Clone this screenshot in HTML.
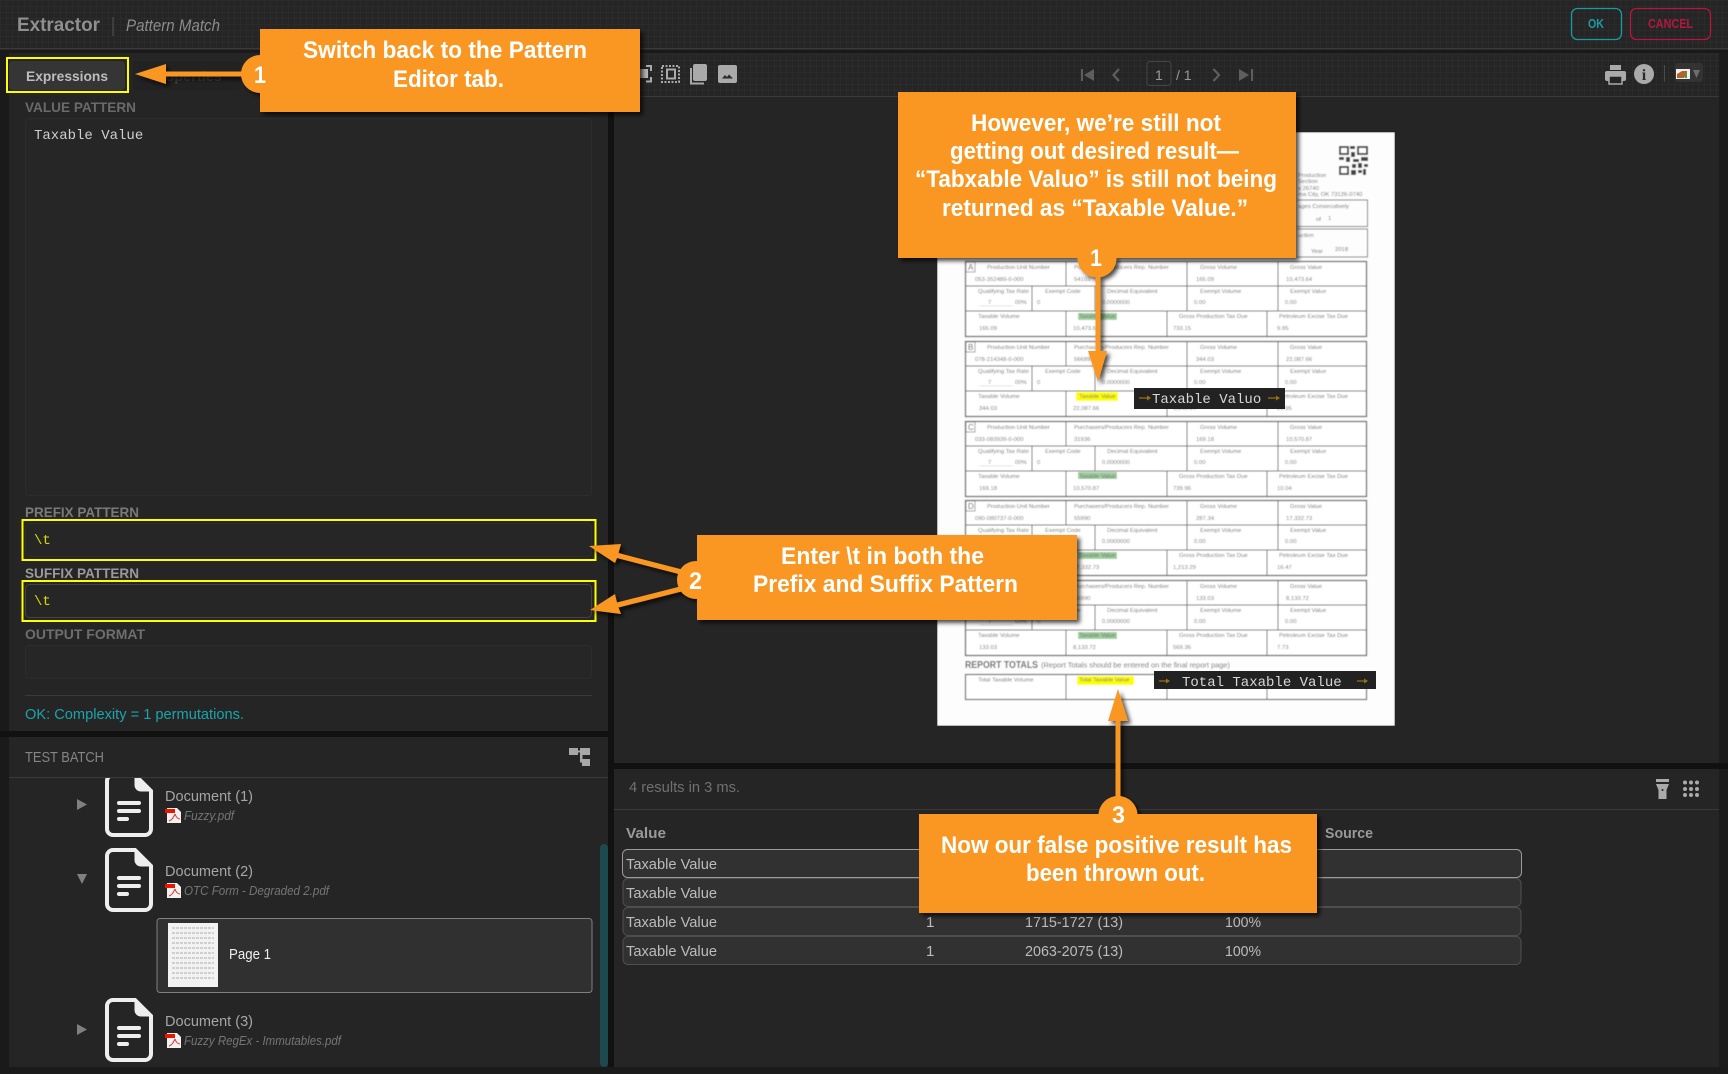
<!DOCTYPE html>
<html lang="en"><head><meta charset="utf-8"><title>Extractor - Pattern Match</title>
<style>
html,body{margin:0;padding:0;background:#161616;width:1728px;height:1074px;overflow:hidden}
svg{display:block;font-family:"Liberation Sans",sans-serif}
.mono{font-family:"Liberation Mono",monospace}
.co{font-weight:700;font-size:24px;fill:#fff;text-anchor:start}
.l{font-size:5.9px;fill:#6e6e6e}
.v{font-size:5.9px;fill:#747474}
.lab{font-size:14px;font-weight:700}
.cell{font-size:15px;fill:#bcbcbc}
.doc{font-size:15px;fill:#a6a6a6}
.file{font-size:13px;font-style:italic;fill:#757575}
</style></head><body>
<svg width="1728" height="1074" viewBox="0 0 1728 1074" xmlns="http://www.w3.org/2000/svg">
<defs>
<pattern id="grid" width="6" height="6" patternUnits="userSpaceOnUse"><rect width="6" height="6" fill="#252525"/><path d="M0 .5H6M.5 0V6" stroke="#2b2b2b" stroke-width="1"/></pattern>
<filter id="sh" x="-20%" y="-20%" width="140%" height="140%"><feDropShadow dx="3" dy="3" stdDeviation="2" flood-color="#000" flood-opacity=".7"/></filter>
<filter id="bl" x="0" y="0" width="100%" height="100%"><feGaussianBlur stdDeviation=".45"/></filter>
<clipPath id="treeclip"><rect x="9" y="778" width="599" height="289"/></clipPath>
<g id="docicon">
<path d="M113 850H135L151 866V904a6 6 0 0 1-6 6H113a6 6 0 0 1-6-6V856a6 6 0 0 1 6-6z" fill="none" stroke="#eee" stroke-width="4"/>
<path d="M135 850V860a6 6 0 0 0 6 6H151z" fill="#eee" stroke="#eee" stroke-width="1"/>
<path d="M119 878H139M119 886H139M119 894H127" stroke="#eee" stroke-width="4" stroke-linecap="round"/>
</g>
<g id="pdf">
<path d="M167 883H177L181 887V898H167z" fill="#f1f1f1"/>
<rect x="165" y="884" width="10" height="4" fill="#e81500"/>
<path d="M175 889C173 893 172 895 169 896M175 889C176 892 178 894 180 894" fill="none" stroke="#e03020" stroke-width="1"/>
</g>
<g id="rep">
<rect x="965.5" y="261.5" width="401" height="75" fill="#fff" stroke="#666" stroke-width="1.3"/>
<path d="M965 286H1367M965 311H1367M1066 261V286M1187 261V311M1278 261V311M1032 286V311M1095 286V311M1066 311V336M1167 311V336M1267 311V336" stroke="#666" stroke-width="1" fill="none"/>
<rect x="966" y="262" width="9" height="10" fill="#fff" stroke="#777" stroke-width=".7"/>
<text class="l" x="987" y="269">Production Unit Number</text>
<text class="l" x="1074" y="269">Purchasers/Producers Rep. Number</text>
<text class="l" x="1200" y="269">Gross Volume</text>
<text class="l" x="1290" y="269">Gross Value</text>
<text class="l" x="978" y="293">Qualifying Tax Rate</text>
<text class="l" x="1045" y="293">Exempt Code</text>
<text class="l" x="1107" y="293">Decimal Equivalent</text>
<text class="l" x="1200" y="293">Exempt Volume</text>
<text class="l" x="1290" y="293">Exempt Value</text>
<text class="l" x="978" y="318">Taxable Volume</text>
<text class="l" x="1179" y="318">Gross Production Tax Due</text>
<text class="l" x="1279" y="318">Petroleum Excise Tax Due</text>
<text class="v" x="988" y="304">7</text><text class="v" x="1015" y="304">00%</text><text class="v" x="1037" y="304">0</text>
<path d="M980 306H1013" stroke="#999" stroke-width=".6" stroke-dasharray="1.500 1"/>
<text class="v" x="1102" y="304">0.0000000</text><text class="v" x="1194" y="304">0.00</text><text class="v" x="1285" y="304">0.00</text>
</g>
</defs>

<rect width="1728" height="1074" fill="#1a1a1a"/>
<!-- header -->
<rect width="1728" height="48" fill="url(#grid)"/>
<rect y="48" width="1728" height="1.5" fill="#3a3a3a"/>
<text x="17" y="31" font-size="19" font-weight="700" fill="#8f8f8f" textLength="83" lengthAdjust="spacingAndGlyphs">Extractor</text>
<rect x="112.5" y="17" width="1" height="19" fill="#555"/>
<text x="126" y="31" font-size="17" font-style="italic" fill="#8c8c8c" textLength="94" lengthAdjust="spacingAndGlyphs">Pattern Match</text>
<rect x="1571.5" y="8.5" width="50" height="31" rx="6" fill="none" stroke="#1a9aa5" stroke-width="1.3"/>
<text x="1588" y="28" font-size="13" font-weight="700" fill="#1a9aa5" textLength="16" lengthAdjust="spacingAndGlyphs">OK</text>
<rect x="1630.5" y="8.5" width="80" height="31" rx="6" fill="none" stroke="#b5173f" stroke-width="1.3"/>
<text x="1648" y="28" font-size="13" font-weight="700" fill="#b5173f" textLength="45" lengthAdjust="spacingAndGlyphs">CANCEL</text>

<!-- left panel -->
<rect x="9" y="53" width="599" height="678" fill="#252525"/>
<rect x="9" y="61" width="116" height="29" rx="4" fill="#353535"/>
<text x="26" y="81" font-size="14" font-weight="700" fill="#bdbdbd" textLength="82" lengthAdjust="spacingAndGlyphs">Expressions</text>
<rect x="133" y="61" width="107" height="29" rx="4" fill="#222"/>
<text x="150" y="81" font-size="14" font-weight="700" fill="#3e3e3e" textLength="72" lengthAdjust="spacingAndGlyphs">Properties</text>
<rect x="7" y="58" width="121" height="34" fill="none" stroke="#ff0" stroke-width="2"/>
<text class="lab" x="25" y="112" fill="#6a6a6a" textLength="111" lengthAdjust="spacingAndGlyphs">VALUE PATTERN</text>
<rect x="25.5" y="118.5" width="566" height="377" rx="4" fill="#262626" stroke="#2d2d2d"/>
<text class="mono" x="34" y="139" font-size="14" fill="#cfcfcf">Taxable Value</text>
<text class="lab" x="25" y="517" fill="#7a7a7a" textLength="114" lengthAdjust="spacingAndGlyphs">PREFIX PATTERN</text>
<rect x="25.5" y="523.5" width="566" height="33" rx="4" fill="#262626" stroke="#2d2d2d"/>
<text class="mono" x="34" y="544" font-size="14" fill="#d9d900">\t</text>
<rect x="22.5" y="520" width="573" height="40" fill="none" stroke="#ff0" stroke-width="2"/>
<text class="lab" x="25" y="578" fill="#9a9a9a" textLength="114" lengthAdjust="spacingAndGlyphs">SUFFIX PATTERN</text>
<rect x="25.5" y="584.5" width="566" height="33" rx="4" fill="#262626" stroke="#444"/>
<text class="mono" x="34" y="605" font-size="14" fill="#d9d900">\t</text>
<rect x="22.5" y="581" width="573" height="40" fill="none" stroke="#ff0" stroke-width="2"/>
<text class="lab" x="25" y="639" fill="#6e6e6e" textLength="120" lengthAdjust="spacingAndGlyphs">OUTPUT FORMAT</text>
<rect x="25.5" y="645.5" width="566" height="33" rx="4" fill="#262626" stroke="#2d2d2d"/>
<rect x="25" y="695" width="567" height="1" fill="#393939"/>
<text x="25" y="719" font-size="15" fill="#1aa5ad" textLength="219" lengthAdjust="spacingAndGlyphs">OK: Complexity = 1 permutations.</text>
<rect x="0" y="731" width="614" height="6" fill="#111"/>
<rect x="608" y="53" width="6" height="1014" fill="#111"/>

<!-- test batch -->
<rect x="9" y="737" width="599" height="330" fill="#252525"/>
<text x="25" y="762" font-size="15" fill="#858585" textLength="79" lengthAdjust="spacingAndGlyphs">TEST BATCH</text>
<g fill="#a8a8a8"><rect x="569" y="748" width="9" height="7"/><rect x="580" y="748" width="10" height="7"/><rect x="582" y="759" width="8" height="7"/><path d="M578 750.500H580V752.500H578zM581 755H582.500V761H582V762.500H580V755z"/></g>
<rect x="9" y="777" width="599" height="1" fill="#3a3a3a"/>
<g clip-path="url(#treeclip)">
<use href="#docicon" transform="translate(0,-75)"/>
<path d="M77 799L87 804.5L77 810z" fill="#808080"/>
<text class="doc" x="165" y="801" textLength="88" lengthAdjust="spacingAndGlyphs">Document (1)</text>
<use href="#pdf" transform="translate(0,-75)"/>
<text class="file" x="184" y="820" textLength="50" lengthAdjust="spacingAndGlyphs">Fuzzy.pdf</text>
<use href="#docicon"/>
<path d="M77 874H87L82 884z" fill="#808080"/>
<text class="doc" x="165" y="876" textLength="88" lengthAdjust="spacingAndGlyphs">Document (2)</text>
<use href="#pdf"/>
<text class="file" x="184" y="895" textLength="145" lengthAdjust="spacingAndGlyphs">OTC Form - Degraded 2.pdf</text>
<rect x="157" y="918.5" width="435" height="74" rx="3" fill="#303030" stroke="#808080"/>
<rect x="168" y="923" width="50" height="64" fill="#f2f2f2"/>
<path d="M172 928H214M172 933H214M172 938H214M172 943H214M172 948H214M172 953H214M172 958H214M172 963H214M172 968H214M172 973H214M172 978H214" stroke="#c4c4c4" stroke-width="1.600" stroke-dasharray="3 1"/>
<text x="229" y="959" font-size="15" fill="#eee" textLength="42" lengthAdjust="spacingAndGlyphs">Page 1</text>
<use href="#docicon" transform="translate(0,150)"/>
<path d="M77 1024L87 1029.5L77 1035z" fill="#808080"/>
<text class="doc" x="165" y="1026" textLength="88" lengthAdjust="spacingAndGlyphs">Document (3)</text>
<use href="#pdf" transform="translate(0,150)"/>
<text class="file" x="184" y="1045" textLength="157" lengthAdjust="spacingAndGlyphs">Fuzzy RegEx - Immutables.pdf</text>
</g>
<rect x="600" y="844" width="8" height="223" rx="4" fill="#1c4a4e"/>

<!-- right viewer -->
<rect x="614" y="53" width="1105" height="710" fill="#252525"/>
<rect x="614" y="53" width="1105" height="43" fill="url(#grid)"/>
<rect x="614" y="96" width="1105" height="1" fill="#3a3a3a"/>
<rect x="1719" y="53" width="9" height="1014" fill="#1c1c1c"/>
<rect x="614" y="763" width="1114" height="6" fill="#111"/>
<!-- toolbar icons -->
<rect x="640" y="69" width="8" height="9" fill="#b5b5b5"/>
<path d="M646 66H651V71M651 77V81.500H646" fill="none" stroke="#aaa" stroke-width="2"/>
<rect x="662" y="66" width="17" height="16" fill="none" stroke="#aaa" stroke-width="2" stroke-dasharray="2 1.500"/>
<rect x="667" y="69.500" width="8" height="9" fill="none" stroke="#aaa" stroke-width="2"/>
<path d="M691 68V83.500H704" fill="none" stroke="#a8a8a8" stroke-width="2"/>
<rect x="693" y="64" width="14" height="17" rx="2" fill="#aaa"/>
<rect x="718" y="65" width="19" height="18" rx="2" fill="#aaa"/>
<path d="M722 78.500L725 75L727 77L729 74.500L733 78.500z" fill="#2a2a2a"/>
<g fill="#5e5e5e">
<rect x="1081" y="69" width="2" height="12"/><path d="M1094 69V81L1084 75z"/>
<rect x="1251" y="69" width="2" height="12"/><path d="M1239 69V81L1249 75z"/>
</g>
<path d="M1119 69L1113.500 75L1119 81M1213.500 69L1219 75L1213.500 81" fill="none" stroke="#5e5e5e" stroke-width="2.200"/>
<rect x="1147" y="61.500" width="24" height="24" rx="3" fill="none" stroke="#444"/>
<text x="1155" y="80" font-size="14" fill="#999">1</text>
<text x="1176" y="80" font-size="14" fill="#999">/ 1</text>
<g fill="#aaa"><rect x="1610" y="65" width="11" height="5"/><rect x="1605" y="71" width="21" height="10" rx="2"/><rect x="1609" y="76" width="13" height="8" fill="#252525" stroke="#aaa" stroke-width="1.500"/></g>
<circle cx="1644" cy="74" r="10" fill="#aaa"/>
<text x="1644" y="80" font-size="16" font-weight="700" fill="#2a2a2a" text-anchor="middle" font-family="Liberation Serif,serif">i</text>
<rect x="1664" y="65" width="1" height="17" fill="#4a4a4a"/>
<rect x="1675" y="63" width="28" height="19" rx="3" fill="#333"/>
<rect x="1676" y="69" width="14" height="10" fill="#f0f0f0"/>
<path d="M1677 78V74L1682 71H1687V74L1684 78z" fill="#b4622a"/><rect x="1685" y="73" width="2" height="5" fill="#4a9a40"/>
<path d="M1693 70H1700L1696.500 78z" fill="#6e6e6e"/>

<!-- scanned document -->
<g filter="url(#bl)">
<rect x="937" y="132" width="458" height="594" fill="#fdfdfd" stroke="#555"/>
<g fill="#444"><rect x="1339" y="146" width="10" height="9"/><rect x="1357" y="146" width="11" height="9"/><rect x="1339" y="166" width="10" height="9"/><rect x="1350" y="146" width="5" height="3"/><rect x="1351" y="152" width="4" height="5"/><rect x="1339" y="157" width="5" height="3"/><rect x="1346" y="157" width="4" height="5"/><rect x="1353" y="159" width="6" height="3"/><rect x="1361" y="157" width="7" height="4"/><rect x="1352" y="164" width="4" height="4"/><rect x="1358" y="163" width="4" height="5"/><rect x="1364" y="164" width="4" height="3"/><rect x="1351" y="170" width="5" height="5"/><rect x="1358" y="170" width="4" height="3"/><rect x="1363" y="169" width="3" height="6"/></g>
<rect x="1341" y="148" width="6" height="5" fill="#fff"/><rect x="1359" y="148" width="7" height="5" fill="#fff"/><rect x="1341" y="168" width="6" height="5" fill="#fff"/>
<text class="l" x="1298" y="177">Production</text><text class="l" x="1298" y="183">Section</text><text class="l" x="1298" y="190">x 26740</text><text class="l" x="1298" y="196">ma City, OK 73126-0740</text>
<path d="M1297 200H1367.500V226.500H1297M1297 229H1367.500V257H1297" fill="none" stroke="#777"/>
<text class="l" x="1298" y="208">ages Consecutively</text><text class="l" x="1316" y="221">of</text><text class="l" x="1328" y="220">1</text>
<text class="l" x="1298" y="237">uction</text><text class="l" x="1311" y="253">Year</text><text class="l" x="1335" y="251">2018</text>

<use href="#rep"/>
<text x="968" y="270" font-size="8" fill="#555">A</text>
<text class="v" x="975" y="281">053-352489-0-000</text><text class="v" x="1074" y="281">54103</text><text class="v" x="1196" y="281">165.09</text><text class="v" x="1286" y="281">10,473.64</text>
<rect x="1078" y="313" width="39" height="7" fill="#9ecf9e"/><text class="l" x="1079" y="318">Taxable Value</text>
<text class="v" x="979" y="330">165.09</text><text class="v" x="1073" y="330">10,473.64</text><text class="v" x="1173" y="330">733.15</text><text class="v" x="1277" y="330">9.95</text>

<use href="#rep" y="80"/>
<text x="968" y="350" font-size="8" fill="#555">B</text>
<text class="v" x="975" y="361">078-214348-0-000</text><text class="v" x="1074" y="361">56689</text><text class="v" x="1196" y="361">344.03</text><text class="v" x="1286" y="361">22,087.66</text>
<rect x="1076" y="392" width="42" height="9" fill="#ff0"/><text class="l" x="1079" y="398">Taxable Value</text>
<text class="v" x="979" y="410">344.03</text><text class="v" x="1073" y="410">22,087.66</text><text class="v" x="1173" y="410">1,546.14</text><text class="v" x="1277" y="410">20.95</text>

<use href="#rep" y="160"/>
<text x="968" y="430" font-size="8" fill="#555">C</text>
<text class="v" x="975" y="441">033-083939-0-000</text><text class="v" x="1074" y="441">31936</text><text class="v" x="1196" y="441">169.18</text><text class="v" x="1286" y="441">10,570.87</text>
<rect x="1078" y="472" width="39" height="7" fill="#9ecf9e"/><text class="l" x="1079" y="478">Taxable Value</text>
<text class="v" x="979" y="490">169.18</text><text class="v" x="1073" y="490">10,570.87</text><text class="v" x="1173" y="490">739.96</text><text class="v" x="1277" y="490">10.04</text>

<use href="#rep" y="239"/>
<text x="968" y="509" font-size="8" fill="#555">D</text>
<text class="v" x="975" y="520">090-080737-0-000</text><text class="v" x="1074" y="520">55990</text><text class="v" x="1196" y="520">287.34</text><text class="v" x="1286" y="520">17,332.73</text>
<rect x="1078" y="552" width="39" height="7" fill="#9ecf9e"/><text class="l" x="1079" y="557">Taxable Value</text>
<text class="v" x="1073" y="569">17,332.73</text><text class="v" x="1173" y="569">1,213.29</text><text class="v" x="1277" y="569">16.47</text>

<use href="#rep" y="319"/>
<text class="v" x="1074" y="600">55990</text><text class="v" x="1196" y="600">133.03</text><text class="v" x="1286" y="600">8,133.72</text>
<rect x="1078" y="632" width="39" height="7" fill="#9ecf9e"/><text class="l" x="1079" y="637">Taxable Value</text>
<text class="v" x="979" y="649">133.03</text><text class="v" x="1073" y="649">8,133.72</text><text class="v" x="1173" y="649">569.36</text><text class="v" x="1277" y="649">7.73</text>

<text x="965" y="668" font-size="10" font-weight="700" fill="#666" textLength="73" lengthAdjust="spacingAndGlyphs">REPORT TOTALS</text>
<text x="1041" y="667.500" font-size="7.500" fill="#707070" textLength="189" lengthAdjust="spacingAndGlyphs">(Report Totals should be entered on the final report page)</text>
<rect x="965.500" y="674.500" width="401" height="25" fill="#fff" stroke="#666" stroke-width="1.200"/>
<path d="M1066 674V699M1167 674V699M1267 674V699" stroke="#666"/>
<text class="l" x="978" y="681.500">Total Taxable Volume</text>
<rect x="1077" y="676" width="57" height="9" fill="#ff0"/><text class="l" x="1079" y="681.500" fill="#444">Total Taxable Value</text>
</g>
<rect x="1134" y="388" width="151" height="21" fill="#222"/>
<text class="mono" x="1152" y="403" font-size="14" fill="#d8d8d8">Taxable Valuo</text>
<path d="M1139 398H1147M1268 398H1276" stroke="#9a7010" stroke-width="1.200"/><path d="M1147 395.500L1151 398L1147 400.500zM1276 395.500L1280 398L1276 400.500z" fill="#9a7010"/>
<rect x="1154" y="671" width="222" height="18" fill="#222"/>
<text class="mono" x="1182" y="686" font-size="14" fill="#d8d8d8">Total Taxable Value</text>
<path d="M1159 681H1166M1357 681H1364" stroke="#9a7010" stroke-width="1.200"/><path d="M1166 678.500L1170 681L1166 683.500zM1364 678.500L1368 681L1364 683.500z" fill="#9a7010"/>

<!-- results -->
<rect x="614" y="769" width="1105" height="298" fill="#252525"/>
<text x="629" y="792" font-size="15" fill="#707070" textLength="111" lengthAdjust="spacingAndGlyphs">4 results in 3 ms.</text>
<rect x="614" y="809" width="1105" height="1" fill="#3a3a3a"/>
<g fill="#aaa"><rect x="1656" y="779" width="13" height="3"/><path d="M1656 784H1669L1666.500 790V799H1658.500V790z"/></g>
<circle cx="1662.500" cy="790" r="1" fill="#222"/>
<g fill="#aaa"><circle cx="1685" cy="782.500" r="2"/><circle cx="1691" cy="782.500" r="2"/><circle cx="1697" cy="782.500" r="2"/><circle cx="1685" cy="789" r="2"/><circle cx="1691" cy="789" r="2"/><circle cx="1697" cy="789" r="2"/><circle cx="1685" cy="795" r="2"/><circle cx="1691" cy="795" r="2"/><circle cx="1697" cy="795" r="2"/></g>
<text x="626" y="838" font-size="15" font-weight="700" fill="#999" textLength="40" lengthAdjust="spacingAndGlyphs">Value</text>
<text x="1325" y="838" font-size="15" font-weight="700" fill="#999" textLength="48" lengthAdjust="spacingAndGlyphs">Source</text>
<rect x="623" y="878.500" width="898" height="28" rx="5" fill="#313131" stroke="#4e4e4e"/>
<rect x="623" y="907.500" width="898" height="28" rx="5" fill="#313131" stroke="#4e4e4e"/>
<rect x="623" y="936.500" width="898" height="28" rx="5" fill="#313131" stroke="#4e4e4e"/>
<rect x="622.500" y="849.500" width="899" height="28" rx="5" fill="#313131" stroke="#9a9a9a"/>
<text class="cell" x="626" y="869" textLength="91" lengthAdjust="spacingAndGlyphs">Taxable Value</text>
<text class="cell" x="626" y="898" textLength="91" lengthAdjust="spacingAndGlyphs">Taxable Value</text>
<text class="cell" x="626" y="927" textLength="91" lengthAdjust="spacingAndGlyphs">Taxable Value</text>
<text class="cell" x="626" y="956" textLength="91" lengthAdjust="spacingAndGlyphs">Taxable Value</text>
<text class="cell" x="926" y="927">1</text><text class="cell" x="1025" y="927" textLength="98" lengthAdjust="spacingAndGlyphs">1715-1727 (13)</text><text class="cell" x="1225" y="927" textLength="36" lengthAdjust="spacingAndGlyphs">100%</text>
<text class="cell" x="926" y="956">1</text><text class="cell" x="1025" y="956" textLength="98" lengthAdjust="spacingAndGlyphs">2063-2075 (13)</text><text class="cell" x="1225" y="956" textLength="36" lengthAdjust="spacingAndGlyphs">100%</text>

<!-- annotations -->
<g fill="#f99722" filter="url(#sh)">
<path d="M135 74L166 64V71.500H245V76.500H166V84z"/>
<circle cx="260" cy="74" r="19"/>
<rect x="260" y="29" width="380" height="83"/>
</g>
<text class="co" x="303" y="58" textLength="284" lengthAdjust="spacingAndGlyphs">Switch back to the Pattern</text>
<text class="co" x="393" y="87" textLength="111" lengthAdjust="spacingAndGlyphs">Editor tab.</text>
<text class="co" x="254" y="83" textLength="12" lengthAdjust="spacingAndGlyphs">1</text>

<g fill="#f99722" filter="url(#sh)">
<circle cx="1097" cy="258" r="19.500"/>
<path d="M1095.500 270H1100.500V351H1107L1098 382L1088 351H1095.500z"/>
<rect x="898" y="92" width="398" height="166"/>
</g>
<circle cx="1097" cy="258" r="19.500" fill="#f99722"/>
<text class="co" x="971" y="131" textLength="250" lengthAdjust="spacingAndGlyphs">However, we’re still not</text>
<text class="co" x="950" y="159" textLength="289" lengthAdjust="spacingAndGlyphs">getting out desired result—</text>
<text class="co" x="915" y="187" textLength="362" lengthAdjust="spacingAndGlyphs">“Tabxable Valuo” is still not being</text>
<text class="co" x="942" y="216" textLength="306" lengthAdjust="spacingAndGlyphs">returned as “Taxable Value.”</text>
<text class="co" x="1090" y="266" textLength="12" lengthAdjust="spacingAndGlyphs">1</text>

<g fill="#f99722" filter="url(#sh)">
<path d="M589 546L621 544L618.500 553L684 570L682.500 575L617 558L615 563z"/>
<path d="M590 610L615 594L617 602.500L682 586L683.500 591L618.500 607.500L621 614z"/>
<circle cx="696" cy="580" r="19"/>
<rect x="697" y="535" width="380" height="85"/>
</g>
<text class="co" x="781" y="564" textLength="203" lengthAdjust="spacingAndGlyphs">Enter \t in both the</text>
<text class="co" x="753" y="592" textLength="265" lengthAdjust="spacingAndGlyphs">Prefix and Suffix Pattern</text>
<text class="co" x="689" y="589" textLength="13" lengthAdjust="spacingAndGlyphs">2</text>

<g fill="#f99722" filter="url(#sh)">
<path d="M1118 689L1128 721H1120.500V800H1115.500V721H1108z"/>
<circle cx="1118" cy="815.500" r="19.500"/>
<rect x="919" y="814" width="398" height="99"/>
</g>
<circle cx="1118" cy="815.500" r="19.500" fill="#f99722"/>
<rect x="919" y="814" width="398" height="30" fill="#f99722"/>
<text class="co" x="941" y="853" textLength="351" lengthAdjust="spacingAndGlyphs">Now our false positive result has</text>
<text class="co" x="1026" y="881" textLength="179" lengthAdjust="spacingAndGlyphs">been thrown out.</text>
<text class="co" x="1112" y="823" textLength="13" lengthAdjust="spacingAndGlyphs">3</text>
</svg>
</body></html>
